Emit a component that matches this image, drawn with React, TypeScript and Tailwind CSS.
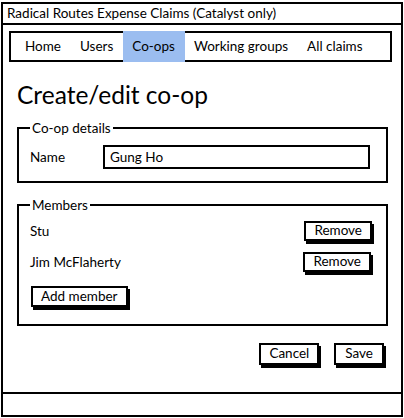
function SketchButton({ label, className = "" }: { label: string; className?: string }) {
  return (
    <button
      className={`h-[20px] border-2 border-black bg-white px-[8px] text-[13.5px] leading-none shadow-[2px_3px_0_#000] ${className}`}
    >
      {label}
    </button>
  );
}

const navItems = ["Home", "Users", "Co-ops", "Working groups", "All claims"];

export default function App() {
  return (
    <div className="w-[404px] h-[418px] bg-white text-black font-['Lato',sans-serif] pt-[2px] pl-[1px]">
      <div className="w-[402px] h-[415px] border-2 border-black flex flex-col">
        <div className="h-[21px] border-b-2 border-black flex items-center px-[4px] text-[13.5px]">
          Radical Routes Expense Claims (Catalyst only)
        </div>

        <div className="flex-1 flex flex-col">
          <nav className="mx-[6px] mt-[6px] h-[31px] border-2 border-black flex items-stretch pl-[5px] text-[13.5px] w-[383px]">
            {navItems.map((item) => (
              <span
                key={item}
                className={
                  item === "Co-ops"
                    ? "flex items-center pl-[9px] pr-[10px] -my-[2px] bg-[#9bbdf0]"
                    : "flex items-center pl-[9px] pr-[10px]"
                }
              >
                {item}
              </span>
            ))}
          </nav>

          <h1 className="ml-[14px] mt-[21px] text-[24.5px] leading-none">Create/edit co-op</h1>

          <fieldset className="ml-[14px] mt-[14px] w-[371px] h-[61px] border-2 border-black">
            <legend className="ml-[11px] px-[2px] text-[13.5px] leading-none">Co-op details</legend>
            <div className="flex items-center mt-[10px] pl-[11px]">
              <span className="w-[73px] text-[13.5px]">Name</span>
              <div className="w-[267px] h-[24px] border-2 border-black flex items-center px-[5px] text-[13.5px]">
                Gung Ho
              </div>
            </div>
          </fieldset>

          <fieldset className="ml-[14px] mt-[16px] w-[371px] h-[127px] border-2 border-black">
            <legend className="ml-[11px] px-[2px] text-[13.5px] leading-none">Members</legend>
            <div className="flex flex-col pl-[11px] pr-[14px] pt-[8px]">
              <div className="flex items-center justify-between h-[22px] text-[13.5px]">
                <span>Stu</span>
                <SketchButton label="Remove" />
              </div>
              <div className="flex items-center justify-between h-[22px] mt-[9px] text-[13.5px]">
                <span>Jim McFlaherty</span>
                <SketchButton label="Remove" className="mr-[1px]" />
              </div>
              <div className="mt-[10px]">
                <SketchButton label="Add member" className="ml-[1px] h-[21px]" />
              </div>
            </div>
          </fieldset>

          <div className="flex justify-end gap-[15px] mt-[17px] mr-[17px]">
            <SketchButton label="Cancel" className="h-[22px]" />
            <SketchButton label="Save" className="h-[22px] px-[9px]" />
          </div>
        </div>

        <div className="h-[23px] border-t-2 border-black" />
      </div>
    </div>
  );
}
